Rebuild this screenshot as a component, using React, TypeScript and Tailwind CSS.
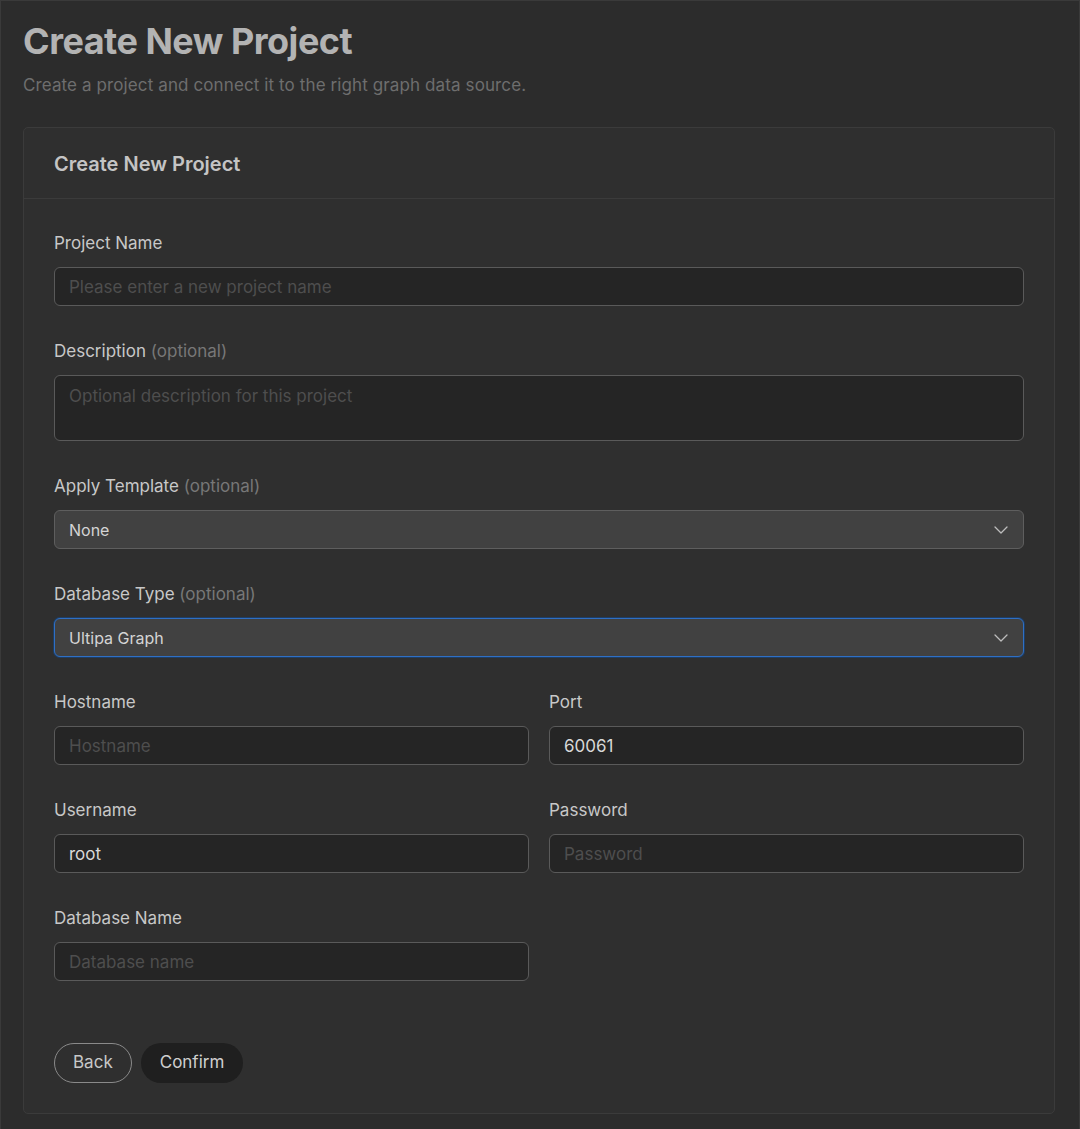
function Label({ text, optional }: { text: string; optional?: boolean }) {
  return (
    <label className="block text-[17px] leading-6 text-[#c8c8c8] mb-3">
      {text}
      {optional && <span className="text-[#777777]"> (optional)</span>}
    </label>
  )
}

function TextInput({ placeholder, value }: { placeholder?: string; value?: string }) {
  return (
    <input
      className="block w-full h-[39px] rounded-md border border-[#5a5a5a] bg-[#252525] px-[14px] text-[17px] text-[#d8d8d8] placeholder:text-[#4e4e4e] outline-none"
      placeholder={placeholder}
      defaultValue={value}
    />
  )
}

function Chevron() {
  return (
    <svg width="14" height="8" viewBox="0 0 14 8" fill="none" className="text-[#bdbdbd]">
      <path d="M1 1l6 6 6-6" stroke="currentColor" strokeWidth="1.3" strokeLinecap="round" strokeLinejoin="round" />
    </svg>
  )
}

function Select({ value, focused }: { value: string; focused?: boolean }) {
  return (
    <div
      className={
        focused
          ? "flex h-[39px] items-center justify-between rounded-md border border-[#2f6fc4] bg-[#414141] pl-[14px] pr-[15px] shadow-[0_0_0_1px_#1e3d63]"
          : "flex h-[39px] items-center justify-between rounded-md border border-[#5e5e5e] bg-[#414141] pl-[14px] pr-[15px]"
      }
    >
      <span className="text-[16px] text-[#d4d4d4]">{value}</span>
      <Chevron />
    </div>
  )
}

export default function App() {
  return (
    <div
      className="min-h-[1129px] border-x border-t border-[#3a3a3a] bg-[#2c2c2c] pl-[22px] pr-[24px] pt-[16px] pb-4"
      style={{ fontFamily: "Inter, 'Noto Sans', sans-serif" }}
    >
      <h1 className="text-[36px] font-bold leading-[48px] tracking-[-0.5px] text-[#b3b3b3]">Create New Project</h1>
      <p className="mt-[8px] text-[17px] leading-6 tracking-[0.11px] text-[#6e6e6e]">
        Create a project and connect it to the right graph data source.
      </p>

      <div className="mt-[30px] rounded-[5px] border border-[#3b3b3b] bg-[#2f2f2f]">
        <div className="border-b border-[#3b3b3b] px-[30px] pt-[2px] h-[71px] flex items-center">
          <h2 className="text-[20px] font-semibold text-[#c4c4c4]">Create New Project</h2>
        </div>

        <div className="px-[30px] pt-[32px] pb-[30px]">
          <div className="flex flex-col gap-[33px]">
            <div>
              <Label text="Project Name" />
              <TextInput placeholder="Please enter a new project name" />
            </div>
            <div>
              <Label text="Description" optional />
              <textarea
                className="block w-full h-[66px] resize-none rounded-md border border-[#5a5a5a] bg-[#252525] px-[14px] py-[8px] text-[17px] text-[#d8d8d8] placeholder:text-[#4e4e4e] outline-none"
                placeholder="Optional description for this project"
              />
            </div>
            <div>
              <Label text="Apply Template" optional />
              <Select value="None" />
            </div>
            <div>
              <Label text="Database Type" optional />
              <Select value="Ultipa Graph" focused />
            </div>
            <div className="grid grid-cols-2 gap-x-[20px] gap-y-[33px]">
              <div>
                <Label text="Hostname" />
                <TextInput placeholder="Hostname" />
              </div>
              <div>
                <Label text="Port" />
                <TextInput value="60061" />
              </div>
              <div>
                <Label text="Username" />
                <TextInput value="root" />
              </div>
              <div>
                <Label text="Password" />
                <TextInput placeholder="Password" />
              </div>
              <div>
                <Label text="Database Name" />
                <TextInput placeholder="Database name" />
              </div>
            </div>
          </div>

          <div className="mt-[62px] flex gap-[9px]">
            <button className="h-[40px] rounded-full border border-[#8a8a8a] px-[18px] text-[17px] text-[#c8c8c8]">
              Back
            </button>
            <button className="h-[40px] rounded-full bg-[#1f1f1f] px-[19px] text-[17px] text-[#cfcfcf]">
              Confirm
            </button>
          </div>
        </div>
      </div>
    </div>
  )
}
